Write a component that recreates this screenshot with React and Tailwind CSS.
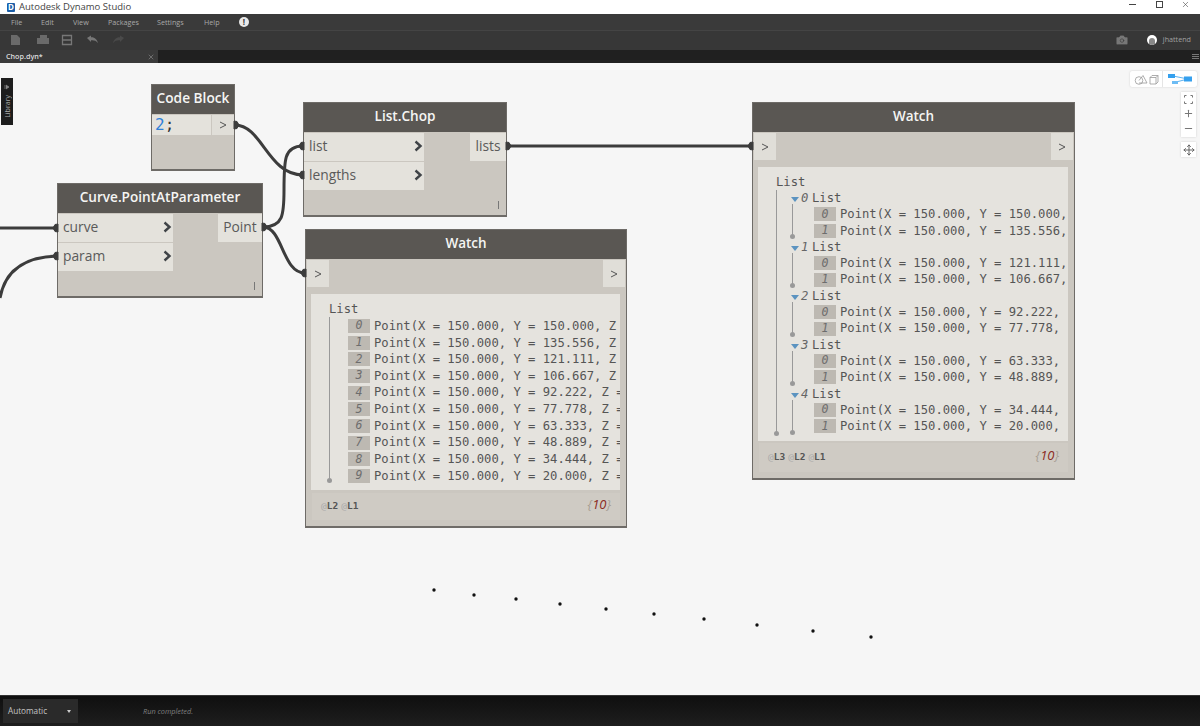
import React from 'react';
import { Camera, Minus, Move, Plus, X } from 'lucide-react';

const sans = 'font-["Open_Sans",sans-serif]';
const mono = 'font-["DejaVu_Sans_Mono",monospace]';

const menus = [
  ['File', 'w-[30px]'],
  ['Edit', 'w-[32px]'],
  ['View', 'w-[35px]'],
  ['Packages', 'w-[49px]'],
  ['Settings', 'w-[47px]'],
  ['Help', 'w-[35px]'],
];

const flat = ['150.000', '135.556', '121.111', '106.667', '92.222', '77.778', '63.333', '48.889', '34.444', '20.000'];
const dots = [[434, 590], [474, 595], [516, 599], [560, 604], [606, 609], [654, 614], [704, 619], [757, 625], [813, 631], [871, 637]];
const inNubs = [[57, 228], [57, 256], [303, 146], [303, 175], [752, 146], [305, 273]];
const outNubs = [[263, 227], [235, 125], [507, 146]];

function Chevron() {
  return (
    <svg width="9" height="12" viewBox="0 0 9 12" className="shrink-0">
      <polyline points="1.5,1.5 6.5,6 1.5,10.5" fill="none" stroke="#3f4347" strokeWidth="2.4" />
    </svg>
  );
}

function Thin() {
  return (
    <svg width="8" height="8" viewBox="0 0 8 8">
      <polyline points="1,1 7,4 1,7" fill="none" stroke="#555" strokeWidth="1" />
    </svg>
  );
}

function Port({ name, className }) {
  return (
    <div className={`flex items-center justify-between bg-[#e4e2dc] pb-[2px] pl-[5px] pr-[1px] text-[13.8px] text-[#5a5a5a] ${sans} ${className}`}>
      {name}
      <Chevron />
    </div>
  );
}

function Header({ title, className }) {
  return (
    <div className={`flex h-[29px] shrink-0 items-center justify-center bg-[#5a5753] pb-[3px] font-semibold text-[#f5f5f3] ${sans} ${className}`}>
      {title}
    </div>
  );
}

function PortNode({ title, className, inputW, outputW, ports, output }) {
  return (
    <div className={`absolute flex flex-col border border-[#6e6b67] border-b-2 bg-[#cbc7c0] ${className}`}>
      <Header title={title} className="text-[13.6px]" />
      <div className="flex flex-1 justify-between pt-[1px]">
        <div className={`flex flex-col gap-[1px] ${inputW}`}>
          {ports.map((p) => <Port key={p} name={p} className="h-[28px]" />)}
        </div>
        <div className={`flex h-[28px] items-center justify-center bg-[#e4e2dc] pb-[2px] text-[13.8px] text-[#5a5a5a] ${sans} ${outputW}`}>{output}</div>
      </div>
      <div className="absolute bottom-[6px] right-[7px] h-[8px] w-[1px] bg-[#777]" />
    </div>
  );
}

function Row({ i, text, h, pad }) {
  return (
    <div className={`flex items-center whitespace-nowrap ${h} ${pad}`}>
      <span className="mr-[4px] flex h-[14px] w-[22px] shrink-0 items-center justify-center bg-[#bdb9b2] text-[11.5px] italic text-[#6d6d6d]">{i}</span>
      <span>{text}</span>
    </div>
  );
}

function Footer({ levels, className }) {
  return (
    <div className={`flex items-center justify-between bg-[#cfcbc4] pl-[9px] pr-[9px] ${className}`}>
      <div className={`flex gap-[3px] text-[9.5px] font-bold text-[#555] ${mono}`}>
        {levels.map((l) => <span key={l}><span className="font-normal text-[#aaa]">@</span>{l}</span>)}
      </div>
      <span className={`-translate-y-[2px] text-[13px] italic text-[#a89f94] ${sans}`}>{'{'}<span className="text-[#8b2a22]">10</span>{'}'}</span>
    </div>
  );
}

function WatchPorts() {
  return (
    <div className="flex h-[28px] shrink-0 justify-between px-[1px] pt-[1px]">
      <div className="flex w-[22px] items-center justify-center bg-[#e0ded8]"><Thin /></div>
      <div className="flex w-[22px] items-center justify-center bg-[#e0ded8]"><Thin /></div>
    </div>
  );
}

function SubList({ n, values }) {
  return (
    <div className="relative">
      <div className="flex h-[16.3px] items-center pl-[15px]">
        <span className="mr-[2px] mt-[3px] h-0 w-0 border-x-[4px] border-t-[5px] border-x-transparent border-t-[#5b93c0]" />
        <span className="w-[11px] italic text-[#666]">{n}</span>
        <span>List</span>
      </div>
      {values.map((v, i) => <Row key={v} i={i} text={`Point(X = 150.000, Y = ${v},`} h="h-[16.3px]" pad="pl-[38px]" />)}
      <div className="absolute left-[16px] top-[14px] h-[33px] w-[1px] bg-[#999]" />
      <div className="absolute left-[14px] top-[44px] h-[5px] w-[5px] rounded-full bg-[#999]" />
    </div>
  );
}

function Canvas() {
  return (
    <div className="relative min-h-0 flex-1 overflow-hidden bg-[#f6f6f6]">
      <div className="absolute left-[1px] top-[15px] flex h-[47px] w-[12px] flex-col items-center gap-[5px] bg-[#1d1d1d] pt-[6px]">
        <svg width="6" height="6" viewBox="0 0 6 6">
          <path d="M0 1 L0 5 M2 1 L5 3 L2 5 Z" stroke="#888" fill="#888" strokeWidth="0.7" />
        </svg>
        <span className={`rotate-180 text-[7px] leading-none text-[#aaa] [writing-mode:vertical-rl] ${sans}`}>Library</span>
      </div>

      <div className="absolute left-[151px] top-[21px] flex h-[87px] w-[84px] flex-col border border-[#6e6b67] border-b-2 bg-[#cbc7c0]">
        <Header title="Code Block" className="text-[13.7px]" />
        <div className="flex h-[21px] gap-[1px] pt-[1px]">
          <div className={`flex w-[59px] items-center bg-[#e4e2dc] pl-[3px] text-[16px] leading-none text-[#333] ${mono}`}>
            <span className="text-[#2f80d8]">2</span>;
          </div>
          <div className="flex flex-1 items-center justify-center bg-[#e0ded8]"><Thin /></div>
        </div>
      </div>

      <PortNode title="Curve.PointAtParameter" className="left-[57px] top-[120px] h-[115px] w-[206px]" inputW="w-[115px]" outputW="w-[44px]" ports={['curve', 'param']} output="Point" />
      <PortNode title="List.Chop" className="left-[303px] top-[39px] h-[115px] w-[204px]" inputW="w-[120px]" outputW="w-[36px]" ports={['list', 'lengths']} output="lists" />

      <div className="absolute left-[305px] top-[166px] flex h-[299px] w-[322px] flex-col border border-[#6e6b67] border-b-2 bg-[#cbc7c0]">
        <Header title="Watch" className="text-[13.5px]" />
        <WatchPorts />
        <div className={`relative ml-[5px] mr-[6px] mt-[7px] h-[196px] overflow-hidden bg-[#e5e3de] pt-[7px] text-[12.2px] text-[#555] ${mono}`}>
          <div className="flex h-[16.67px] items-center pl-[18px]">List</div>
          {flat.map((v, i) => <Row key={v} i={i} text={`Point(X = 150.000, Y = ${v}, ${v.length === 7 ? 'Z' : 'Z ='}`} h="h-[16.67px]" pad="pl-[37px]" />)}
          <div className="absolute left-[18px] top-[23px] h-[163px] w-[1px] bg-[#999]" />
          <div className="absolute left-[16px] top-[184px] h-[5px] w-[5px] rounded-full bg-[#999]" />
        </div>
        <Footer levels={['L2', 'L1']} className="mx-[6px] mt-[3px] h-[27px]" />
      </div>

      <div className="absolute left-[752px] top-[39px] flex h-[378px] w-[323px] flex-col border border-[#6e6b67] border-b-2 bg-[#cbc7c0]">
        <Header title="Watch" className="text-[13.5px]" />
        <WatchPorts />
        <div className={`relative ml-[5px] mr-[6px] mt-[7px] h-[274px] overflow-hidden bg-[#e5e3de] pl-[18px] pt-[8px] text-[12.2px] text-[#555] ${mono}`}>
          <div className="flex h-[15px] items-center">List</div>
          <SubList n={0} values={[flat[0], flat[1]]} />
          <SubList n={1} values={[flat[2], flat[3]]} />
          <SubList n={2} values={[flat[4], flat[5]]} />
          <SubList n={3} values={[flat[6], flat[7]]} />
          <SubList n={4} values={[flat[8], flat[9]]} />
          <div className="absolute left-[18px] top-[23px] h-[243px] w-[1px] bg-[#999]" />
          <div className="absolute left-[16px] top-[264px] h-[5px] w-[5px] rounded-full bg-[#999]" />
        </div>
        <Footer levels={['L3', 'L2', 'L1']} className="mx-[6px] mt-[2px] h-[29px]" />
      </div>

      <svg className="pointer-events-none absolute inset-0 h-full w-full" viewBox="0 63 1200 632">
        <g fill="none" stroke="#3c3c3c" strokeWidth="3">
          <path d="M0 228 L57 228" />
          <path d="M0 298 C5 270 25 257 57 256" />
          <path d="M235 125 C262 125 268 175 303 175" />
          <path d="M263 227 C283 227 284 215 284 190 C284 160 284 146 303 146" />
          <path d="M263 227 C283 227 282 273 305 273" />
          <path d="M507 146 L752 146" />
        </g>
        <g fill="#3c3c3c" stroke="#3c3c3c" strokeLinejoin="round">
          {inNubs.map(([x, y]) => (
            <polygon key={`${x}-${y}`} points={`${x + 1},${y - 4} ${x - 2},${y - 3.5} ${x - 4},${y} ${x - 2},${y + 3.5} ${x + 1},${y + 4}`} />
          ))}
          {outNubs.map(([x, y]) => (
            <polygon key={`${x}-${y}`} points={`${x - 1},${y - 4} ${x + 2},${y - 3.5} ${x + 4},${y} ${x + 2},${y + 3.5} ${x - 1},${y + 4}`} />
          ))}
        </g>
        {dots.map(([x, y]) => <circle key={x} cx={x} cy={y} r="1.7" fill="#111" />)}
      </svg>

      <div className="absolute right-[3px] top-[8px] flex h-[16px] w-[67px] rounded-[2px] bg-white shadow-[0_0_2px_#ccc]">
        <div className="flex w-[33px] items-center justify-center border-r border-[#e5e5e5]">
          <svg width="25" height="11" viewBox="0 0 25 11" fill="none" stroke="#999" strokeWidth="0.8">
            <circle cx="5" cy="6.5" r="3.8" />
            <path d="M5 6.5 L9 1.5 L13 9 L5 9" />
            <path d="M16 3.5 L22 3.5 L22 10 L16 10 Z M16 3.5 L18 1.5 L24 1.5 L24 8 L22 10 M22 3.5 L24 1.5" />
          </svg>
        </div>
        <div className="flex flex-1 items-center justify-center">
          <svg width="25" height="12" viewBox="0 0 25 12">
            <path d="M5 3 L20 6 M8 9 L20 6" stroke="#35a0ee" strokeWidth="0.8" />
            <rect x="0" y="1" width="7" height="4" fill="#35a0ee" />
            <rect x="4" y="8" width="6" height="3" fill="#6dbcf4" />
            <rect x="16" y="3.5" width="8" height="5" fill="#35a0ee" />
          </svg>
        </div>
      </div>
      <div className="absolute right-[4px] top-[29px] flex h-[45px] w-[15px] flex-col items-center justify-between bg-white py-[3px] text-[#777] shadow-[0_0_2px_#ccc]">
        <svg width="9" height="9" viewBox="0 0 9 9" fill="none" stroke="#777" strokeWidth="1">
          <path d="M0.5 2.5 V0.5 H2.5 M6.5 0.5 H8.5 V2.5 M8.5 6.5 V8.5 H6.5 M2.5 8.5 H0.5 V6.5" />
        </svg>
        <Plus size={11} strokeWidth={2.2} />
        <Minus size={11} strokeWidth={2.2} />
      </div>
      <div className="absolute right-[4px] top-[79px] flex h-[15px] w-[15px] items-center justify-center bg-white text-[#666] shadow-[0_0_2px_#ccc]">
        <Move size={12} strokeWidth={2} />
      </div>
    </div>
  );
}

export default function App() {
  return (
    <div className={`flex h-[726px] w-[1200px] flex-col overflow-hidden bg-white ${sans}`}>
      <div className="flex h-[14px] shrink-0 items-center bg-white pl-[7px] text-[9.5px] text-[#444]">
        <span className="mr-[4px] flex h-[9px] w-[8px] items-center justify-center rounded-[1px] bg-[#1c5fa8] text-[8px] font-bold leading-none text-white">D</span>
        Autodesk Dynamo Studio
        <div className="mb-[5px] ml-auto flex items-center pr-[10px] text-[#444]">
          <div className="mr-[20px] h-[1px] w-[7px] bg-[#444]" />
          <div className="mr-[18px] h-[7px] w-[7px] border border-[#444]" />
          <X size={9} strokeWidth={1.5} />
        </div>
      </div>

      <div className="flex h-[16px] shrink-0 items-center bg-[#3a3a3a] pl-[11px] text-[7.2px] text-[#a8a8a8]">
        {menus.map(([m, w]) => <span key={m} className={w}>{m}</span>)}
        <span className="flex h-[10px] w-[10px] items-center justify-center rounded-full bg-[#e8e8e8] text-[8px] font-bold leading-none text-[#333]">!</span>
      </div>

      <div className="flex h-[20px] shrink-0 items-center border-t border-[#444] bg-[#373737] pb-[2px] pl-[11px] pr-[9px]">
        <svg width="120" height="12" viewBox="0 0 120 12">
          <path d="M0 1 H6 L9 4 V11 H0 Z" fill="#6a6a6a" />
          <path d="M26 4 H29 V1 H36 V4 H38 V10 H26 Z" fill="#6a6a6a" />
          <path d="M51.5 1.5 H60.5 V10.5 H51.5 Z M51.5 6 H60.5" fill="none" stroke="#777" strokeWidth="1.3" />
          <path d="M76 4 L80 1.5 V3.2 C84 3 86 5.5 87 9 C85 6.5 83 6 80 6.2 V8 Z" fill="#777" />
          <path d="M113 4 L109 1.5 V3.2 C105 3 103 5.5 102 9 C104 6.5 106 6 109 6.2 V8 Z" fill="#4a4a4a" />
        </svg>
        <div className="ml-auto flex items-center text-[7.2px] text-[#a0a0a0]">
          <Camera size={14} fill="#777" stroke="#373737" strokeWidth={1} className="mr-[18px]" />
          <span className="mr-[6px] flex h-[10px] w-[10px] items-end justify-center overflow-hidden rounded-full bg-white">
            <span className="h-[7px] w-[6px] rounded-t-full bg-[#888]" />
          </span>
          jhattend
        </div>
      </div>

      <div className="flex h-[13px] shrink-0 items-center bg-[#202020]">
        <div className="flex h-full w-[158px] items-center justify-between bg-[#3a3a3a] pl-[6px] pr-[3px] text-[7.2px] font-semibold text-[#ddd]">
          Chop.dyn*
          <X size={8} strokeWidth={2} className="text-[#888]" />
        </div>
        <div className="ml-auto mr-[1px] flex w-[7px] flex-col gap-[1px]">
          <div className="h-[1px] bg-[#777]" />
          <div className="h-[1px] bg-[#777]" />
          <div className="h-[1px] bg-[#777]" />
        </div>
      </div>

      <Canvas />

      <div className="flex h-[31px] shrink-0 items-center border-t border-[#333] bg-gradient-to-b from-[#0f0f0f] to-[#1e1e1e] pl-[3px]">
        <div className="flex h-[24px] w-[75px] items-center justify-between bg-[#2a2a2a] pl-[5px] pr-[7px] text-[8.2px] text-[#c4c4c4]">
          Automatic
          <span className="h-0 w-0 border-x-[2.5px] border-t-[3px] border-x-transparent border-t-[#ccc]" />
        </div>
        <span className="ml-[65px] text-[7.3px] italic text-[#808080]">Run completed.</span>
      </div>
    </div>
  );
}
